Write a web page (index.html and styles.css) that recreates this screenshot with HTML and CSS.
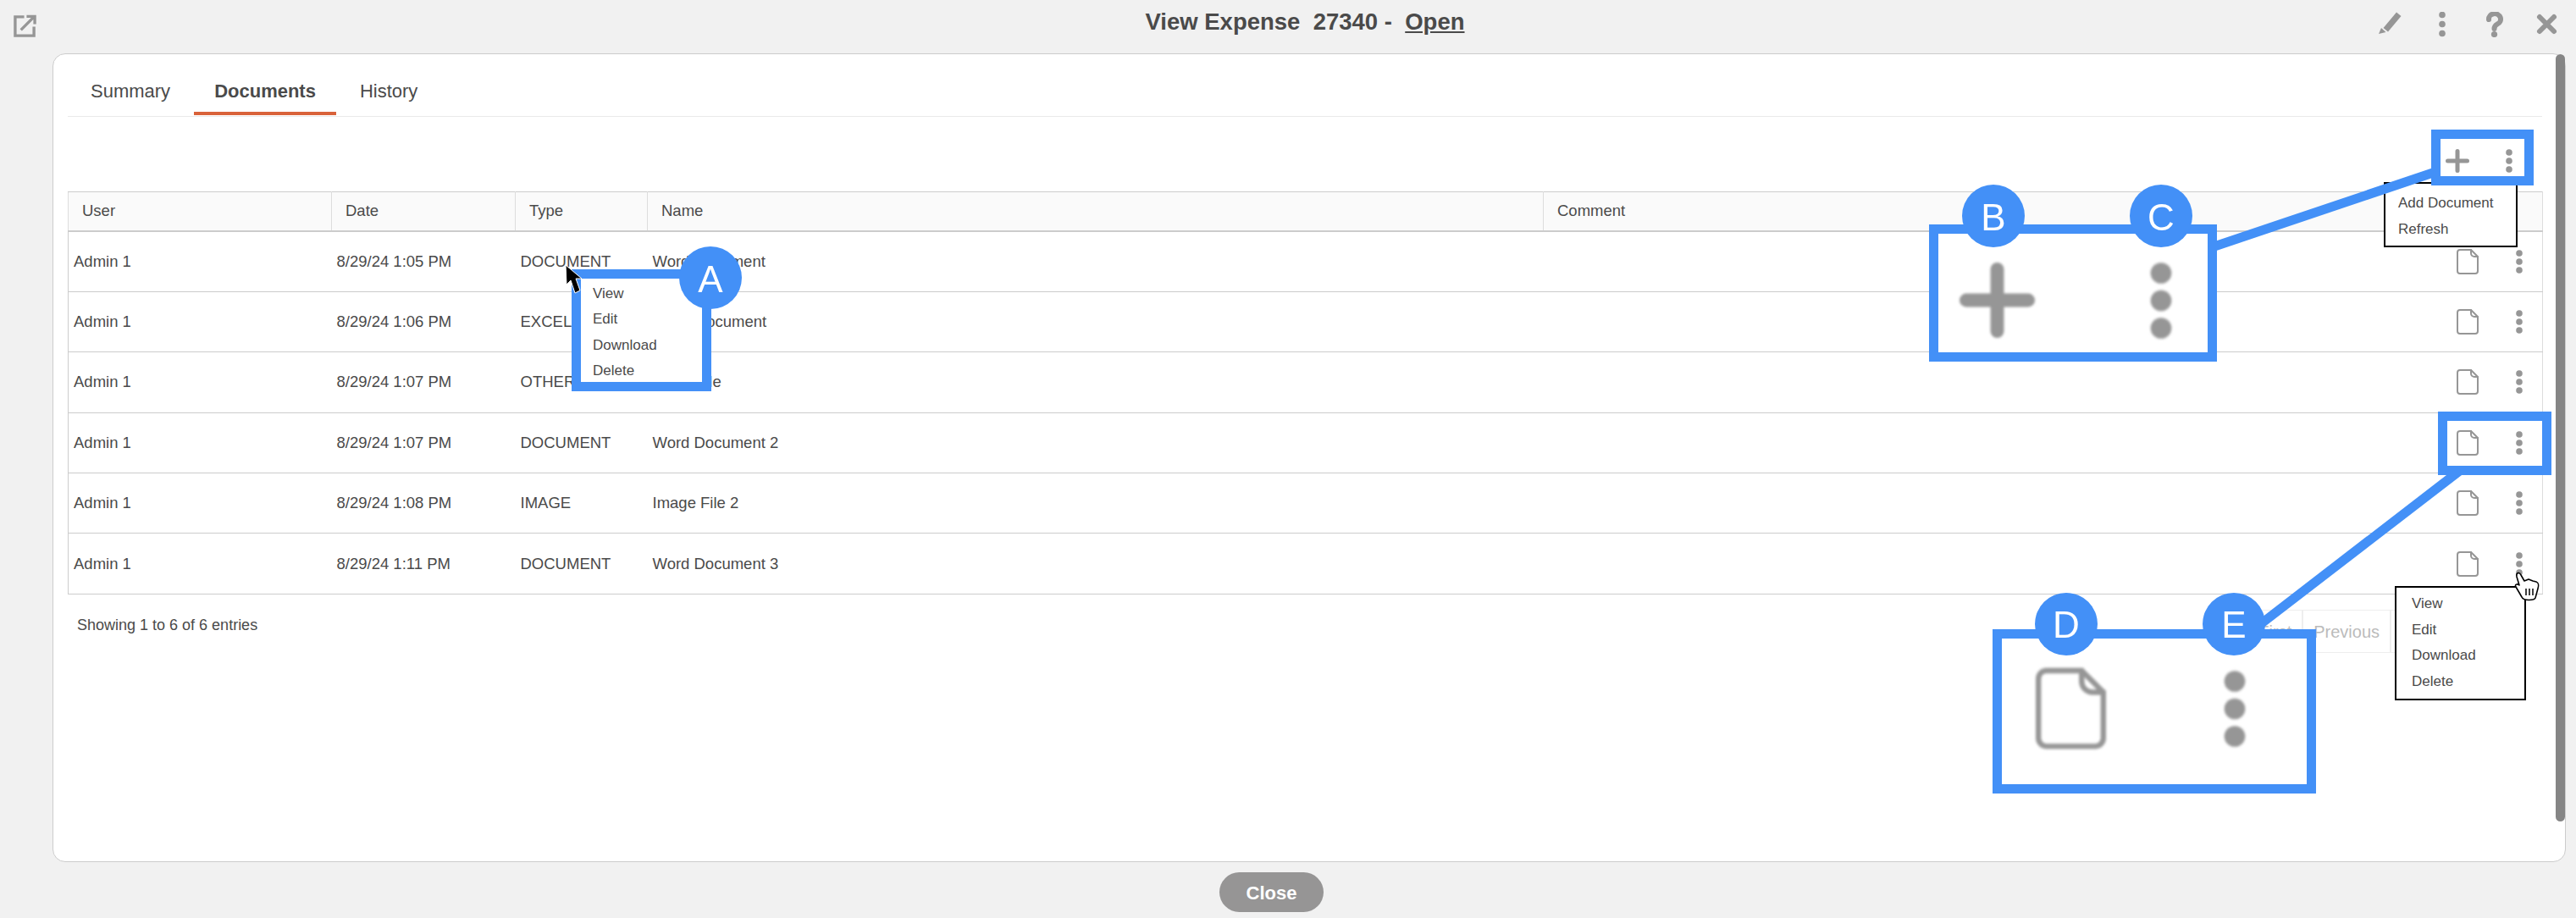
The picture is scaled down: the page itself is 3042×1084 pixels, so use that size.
FILE: index.html
```html
<!DOCTYPE html>
<html>
  <head>
    <meta charset="UTF-8" />
    <title>View Expense</title>
    <link rel="stylesheet" href="styles.css">
  </head>
  <body>
    <svg class="icon-defs" width="0" height="0">
      <symbol id="i-doc" viewBox="0 0 26 30">
        <path class="line-thin" d="M4 1H17L25 9V26A3 3 0 0 1 22 29H4A3 3 0 0 1 1 26V4A3 3 0 0 1 4 1Z" />
        <path class="line-thin" d="M17 1V5A4 4 0 0 0 21 9H25" />
      </symbol>
      <symbol id="i-kebab" viewBox="0 0 8 28">
        <circle class="solid" cx="4" cy="4" r="3.8" />
        <circle class="solid" cx="4" cy="14" r="3.8" />
        <circle class="solid" cx="4" cy="24" r="3.8" />
      </symbol>
      <symbol id="i-plus" viewBox="0 0 28 28">
        <path class="line-thick" d="M14 2.5V25.5M2.5 14H25.5" />
      </symbol>
    </svg>

    <header class="top-bar">
      <svg class="popout-icon" viewBox="0 0 28 28" width="27" height="27">
        <path class="line-mid" d="M13 3H2V26H25V15" />
        <path class="line-mid" d="M9 19L24 4M16 2.5H26V12" />
      </svg>
      <h1 class="title">View Expense &nbsp;27340 - &nbsp;<u>Open</u></h1>
      <div class="top-actions">
        <svg viewBox="0 0 30 30" width="30" height="30">
          <polygon class="solid" points="6.5,19 22,0.5 27.5,5 12,23.5" />
          <polygon class="solid" points="1,26 4,19 9.5,24" />
        </svg>
        <svg viewBox="0 0 30 30" width="30" height="30">
          <circle class="solid" cx="15" cy="3.5" r="3.8" />
          <circle class="solid" cx="15" cy="14.5" r="3.8" />
          <circle class="solid" cx="15" cy="25.5" r="3.8" />
        </svg>
        <svg viewBox="0 0 30 30" width="30" height="30">
          <path class="line-heavy" d="M8 9A7 6.5 0 1 1 18 14.5C15.5 16 14.5 17 14.5 20" />
          <circle class="solid" cx="14.5" cy="26.5" r="3.6" />
        </svg>
        <svg viewBox="0 0 30 30" width="30" height="30">
          <path class="line-heavy" d="M7 6L24 23M24 6L7 23" />
        </svg>
      </div>
    </header>

    <main class="card">
      <nav class="tabs">
        <a class="tab">Summary</a>
        <a class="tab active">Documents</a>
        <a class="tab">History</a>
      </nav>

      <div class="toolbar">
        <svg width="28" height="28"><use href="#i-plus" /></svg>
        <svg width="8" height="28"><use href="#i-kebab" /></svg>
      </div>

      <table class="doc-table">
        <colgroup>
          <col class="col-user" />
          <col class="col-date" />
          <col class="col-type" />
          <col class="col-name" />
          <col />
          <col class="col-actions" />
        </colgroup>
        <thead>
          <tr>
            <th>User</th>
            <th>Date</th>
            <th>Type</th>
            <th>Name</th>
            <th>Comment</th>
            <th class="no-divider"></th>
          </tr>
        </thead>
        <tbody>
          <tr>
            <td>Admin 1</td>
            <td>8/29/24 1:05 PM</td>
            <td>DOCUMENT</td>
            <td>Word Document</td>
            <td></td>
            <td><div class="row-icons"><svg width="26" height="30"><use href="#i-doc" /></svg><svg width="8" height="28"><use href="#i-kebab" /></svg></div></td>
          </tr>
          <tr>
            <td>Admin 1</td>
            <td>8/29/24 1:06 PM</td>
            <td>EXCEL</td>
            <td>Excel Document</td>
            <td></td>
            <td><div class="row-icons"><svg width="26" height="30"><use href="#i-doc" /></svg><svg width="8" height="28"><use href="#i-kebab" /></svg></div></td>
          </tr>
          <tr>
            <td>Admin 1</td>
            <td>8/29/24 1:07 PM</td>
            <td>OTHER</td>
            <td>Other File</td>
            <td></td>
            <td><div class="row-icons"><svg width="26" height="30"><use href="#i-doc" /></svg><svg width="8" height="28"><use href="#i-kebab" /></svg></div></td>
          </tr>
          <tr>
            <td>Admin 1</td>
            <td>8/29/24 1:07 PM</td>
            <td>DOCUMENT</td>
            <td>Word Document 2</td>
            <td></td>
            <td><div class="row-icons"><svg width="26" height="30"><use href="#i-doc" /></svg><svg width="8" height="28"><use href="#i-kebab" /></svg></div></td>
          </tr>
          <tr>
            <td>Admin 1</td>
            <td>8/29/24 1:08 PM</td>
            <td>IMAGE</td>
            <td>Image File 2</td>
            <td></td>
            <td><div class="row-icons"><svg width="26" height="30"><use href="#i-doc" /></svg><svg width="8" height="28"><use href="#i-kebab" /></svg></div></td>
          </tr>
          <tr>
            <td>Admin 1</td>
            <td>8/29/24 1:11 PM</td>
            <td>DOCUMENT</td>
            <td>Word Document 3</td>
            <td></td>
            <td><div class="row-icons"><svg width="26" height="30"><use href="#i-doc" /></svg><svg width="8" height="28"><use href="#i-kebab" /></svg></div></td>
          </tr>
        </tbody>
      </table>

      <div class="table-footer">
        <div class="entries">Showing 1 to 6 of 6 entries</div>
        <div class="pager">
          <a>First</a>
          <a>Previous</a>
          <a>Next</a>
          <a>Last</a>
        </div>
      </div>

      <div class="scroll-thumb"></div>
    </main>

    <footer class="bottom-bar">
      <button type="button" class="close-btn">Close</button>
    </footer>

    <!-- popup menus -->
    <ul class="menu menu-a">
      <li>View</li>
      <li>Edit</li>
      <li>Download</li>
      <li>Delete</li>
    </ul>
    <ul class="menu menu-add">
      <li>Add Document</li>
      <li>Refresh</li>
    </ul>
    <ul class="menu menu-row">
      <li>View</li>
      <li>Edit</li>
      <li>Download</li>
      <li>Delete</li>
    </ul>

    <!-- blue callouts drawn on top of the screenshot -->
    <svg class="callouts" viewBox="0 0 3042 1084" width="3042" height="1084">
      <line class="callout-line" x1="2612" y1="292" x2="2876" y2="203" />
      <line class="callout-line" x1="2905" y1="555.6" x2="2650" y2="752" />

      <rect class="callout-box" x="680.5" y="323.5" width="154" height="133" />
      <rect class="callout-box" x="2876.5" y="158.5" width="110" height="55" />
      <rect class="callout-box" x="2884.5" y="491.5" width="123" height="64" />
      <rect class="callout-box filled" x="2283.5" y="270.5" width="329" height="151" />
      <rect class="callout-box filled" x="2358.5" y="748.5" width="371" height="183" />

      <g class="zoomed">
        <use href="#i-plus" x="2314" y="310" width="89" height="89" />
        <use href="#i-kebab" x="2539" y="309" width="26" height="92" />
        <use href="#i-doc" x="2404" y="788" width="83" height="97" />
        <use href="#i-kebab" x="2626" y="791" width="26" height="92" />
      </g>

      <circle class="badge" cx="839" cy="328" r="37" />
      <circle class="badge" cx="2354" cy="255" r="37" />
      <circle class="badge" cx="2552" cy="255" r="37" />
      <circle class="badge" cx="2440" cy="737" r="37" />
      <circle class="badge" cx="2638" cy="737" r="37" />
      <text class="badge-letter" x="839" y="345">A</text>
      <text class="badge-letter" x="2354" y="272">B</text>
      <text class="badge-letter" x="2552" y="272">C</text>
      <text class="badge-letter" x="2440" y="753">D</text>
      <text class="badge-letter" x="2638" y="753">E</text>

      <!-- mouse pointers -->
      <path class="arrow-cursor" d="M668 313L669 336L674 331L679 346L685 343L680 329L687 329Z" />
      <path class="hand-cursor" d="M2972 681C2971 676 2975 675 2977 679L2981 686L2986 684L2991 686L2995 687C2998 688 2998 692 2997 695L2994 706C2993 709 2980 710 2978 705L2971 693C2969 690 2973 689 2975 691Z" />
      <path class="hand-lines" d="M2983 695V703M2987 695V703M2991 695V703" />
    </svg>
  </body>
</html>
```

FILE: styles.css
```css
body {
  font-family: "Liberation Sans", Arial, sans-serif;
  background-color: #f1f1f1;
  color: #4a4a4a;
  margin: 0;
  height: 100vh;
  display: flex;
  flex-direction: column;
  overflow: hidden;
}

.icon-defs {
  position: absolute;
}

/* icon strokes */
.solid {
  fill: #969696;
}

.line-thin,
.line-mid,
.line-thick,
.line-heavy {
  fill: none;
  stroke: #969696;
  stroke-linecap: round;
}

.line-thin {
  stroke-width: 2;
  stroke-linejoin: round;
}

.line-mid {
  stroke-width: 3.5;
  stroke-linecap: butt;
}

.line-thick {
  stroke-width: 5;
}

.line-heavy {
  stroke-width: 6;
}

/* top bar */
.top-bar {
  height: 63px;
  flex: none;
  display: grid;
  grid-template-columns: 1fr auto 1fr;
  padding: 0 20px 0 16px;
  box-sizing: border-box;
}

.popout-icon {
  margin-top: 17px;
}

.title {
  font-size: 27.5px;
  line-height: 31px;
  font-weight: bold;
  margin: 10px 0 0 44px;
}

.top-actions {
  display: flex;
  justify-content: flex-end;
  gap: 31.5px;
  padding-top: 14px;
}

/* card */
.card {
  flex: 1;
  position: relative;
  background-color: #fff;
  border: 1px solid #ccc;
  border-radius: 15px;
  margin: 0 12px 0 62px;
  padding: 0 27px 0 17px;
}

.tabs {
  display: flex;
  gap: 4px;
  padding: 0 0 1px 3px;
  border-bottom: 1px solid #eaeaea;
}

.tab {
  font-size: 22px;
  line-height: 26px;
  padding: 31px 24px 11px;
  border-bottom: 4px solid transparent;
}

.tab.active {
  font-weight: bold;
  border-bottom-color: #d9623a;
}

.toolbar {
  height: 88px;
  box-sizing: border-box;
  display: flex;
  justify-content: flex-end;
  gap: 43px;
  padding: 38px 35px 0 0;
}

/* table */
.doc-table {
  width: 2923px;
  table-layout: fixed;
  border-collapse: collapse;
  font-size: 18.5px;
}

.col-user {
  width: 311px;
}

.col-date {
  width: 217px;
}

.col-type {
  width: 156px;
}

.col-name {
  width: 1058px;
}

.col-actions {
  width: 140px;
}

.doc-table th {
  height: 44.5px;
  padding: 0 0 0 16px;
  background-color: #fafafa;
  border: 1px solid #ddd;
  border-top-color: #ccc;
  border-bottom: 2px solid #ccc;
  font-weight: normal;
  text-align: left;
}

.doc-table th.no-divider {
  border-left: none;
}

.doc-table td {
  height: 70.4px;
  padding: 0 0 0 6px;
  border-top: 1px solid #ccc;
  border-bottom: 1px solid #ccc;
}

.doc-table td:first-child {
  border-left: 1px solid #ccc;
}

.doc-table td:last-child {
  border-right: 1px solid #ddd;
}

.row-icons {
  display: flex;
  justify-content: flex-end;
  align-items: center;
  gap: 44px;
  padding-right: 23px;
}

.table-footer {
  display: flex;
  justify-content: space-between;
  margin-top: 18px;
  padding: 0 48px 0 11px;
}

.entries {
  font-size: 18px;
  line-height: 22px;
  margin-top: 7px;
}

.pager {
  display: flex;
  font-size: 20px;
  color: #bbb;
}

.pager a {
  height: 51px;
  line-height: 51px;
  padding: 0 12px;
  border: 1px solid #eee;
  box-sizing: border-box;
}

.scroll-thumb {
  position: absolute;
  top: 0;
  right: 0;
  bottom: 47px;
  width: 11px;
  background-color: #858585;
  border-radius: 7px;
}

/* bottom bar */
.bottom-bar {
  height: 66px;
  flex: none;
  display: flex;
  justify-content: center;
  align-items: flex-start;
  padding: 12px 39px 0 0;
  box-sizing: border-box;
}

.close-btn {
  width: 123px;
  height: 47px;
  padding: 2px 0 0;
  border: none;
  border-radius: 24px;
  background-color: #969595;
  color: #fff;
  font-family: inherit;
  font-size: 22px;
  font-weight: bold;
}

/* popup menus */
.menu {
  position: absolute;
  list-style: none;
  margin: 0;
  background-color: #fff;
  font-size: 17px;
  box-sizing: border-box;
}

.menu-a {
  left: 675px;
  top: 318px;
  width: 165px;
  height: 144px;
  padding: 14px 0 0 25px;
  line-height: 30.3px;
}

.menu-add {
  left: 2815px;
  top: 215px;
  width: 158px;
  height: 77px;
  padding: 7px 0 0 15px;
  line-height: 31px;
  border: 2px solid #000;
}

.menu-row {
  left: 2828px;
  top: 692px;
  width: 155px;
  height: 135px;
  padding: 4px 0 0 18px;
  line-height: 30.5px;
  border: 2px solid #000;
}

/* callouts */
.callouts {
  position: absolute;
  top: 0;
  left: 0;
}

.callout-line {
  stroke: #4390f7;
  stroke-width: 11;
}

.callout-box {
  fill: none;
  stroke: #4390f7;
  stroke-width: 11;
}

.callout-box.filled {
  fill: #fff;
}

.zoomed {
  filter: blur(1.5px);
}

.badge {
  fill: #4390f7;
}

.badge-letter {
  fill: #fff;
  font-size: 44px;
  text-anchor: middle;
}

.arrow-cursor {
  fill: #000;
  stroke: #fff;
  stroke-width: 1;
}

.hand-cursor {
  fill: #fff;
  stroke: #000;
  stroke-width: 1.6;
  stroke-linejoin: round;
}

.hand-lines {
  fill: none;
  stroke: #000;
  stroke-width: 1.5;
}
```
